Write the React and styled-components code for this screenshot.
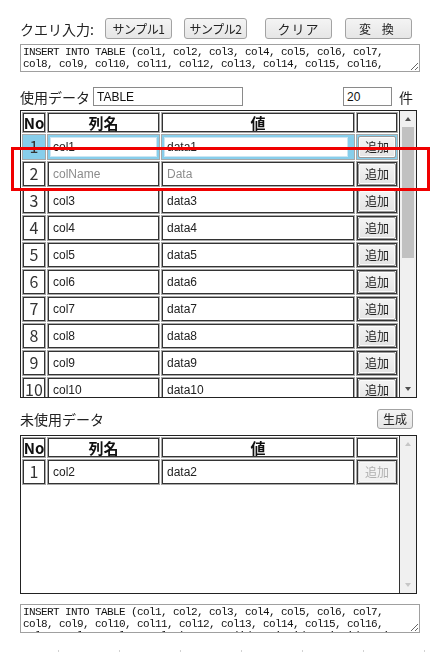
import styled, { createGlobalStyle } from 'styled-components';

const GlobalStyle = createGlobalStyle`
  html, body { margin: 0; padding: 0; background: #fff; overflow: hidden; }
  body { font-family: "Noto Sans CJK JP", "Noto Sans", sans-serif; color: #222; }
`;

const QUERY =
  'INSERT INTO TABLE (col1, col2, col3, col4, col5, col6, col7, col8, col9, col10, col11, col12, col13, col14, col15, col16, col17, col18, col19, col20) VALUES (' +
  Array.from({ length: 20 }, (_, i) => `'data${i + 1}'`).join(', ') +
  ');';

const usedRows = Array.from({ length: 20 }, (_, i) => ({
  no: i + 1,
  name: i === 1 ? '' : `col${i + 1}`,
  value: i === 1 ? '' : `data${i + 1}`,
}));

const Page = styled.div`
  position: relative;
  width: 400px;
  padding: 18px 0 0 20px;
`;

const Row = styled.div`
  display: flex;
  align-items: center;
  width: ${(p) => p.$w || 393}px;
  height: ${(p) => p.$h || 21}px;
  margin-top: ${(p) => p.$mt || 0}px;
`;

const Label = styled.span`
  font-size: 14px;
  line-height: 20px;
  color: #222;
  white-space: nowrap;
`;

const Button = styled.button`
  box-sizing: border-box;
  width: ${(p) => p.$w}px;
  height: ${(p) => p.$h || 21}px;
  margin-left: ${(p) => (p.$ml === 'auto' ? 'auto' : `${p.$ml || 0}px`)};
  padding: 0;
  font-family: "Noto Sans CJK JP", sans-serif;
  font-size: ${(p) => p.$fs || 12}px;
  line-height: 1;
  color: #222;
  background: linear-gradient(#f4f4f4, #e6e6e6);
  border: 1px solid #a3a3a3;
  border-radius: 3px;
  letter-spacing: ${(p) => p.$ls || 0}px;
`;

const Query = styled.textarea`
  box-sizing: border-box;
  display: block;
  width: 400px;
  height: ${(p) => p.$h || 28}px;
  margin-top: ${(p) => p.$mt || 0}px;
  padding: 1px 2px;
  font-family: "Liberation Mono", monospace;
  font-size: 11px;
  letter-spacing: -0.6px;
  line-height: 12px;
  color: #111;
  border: 1px solid #a0a0a0;
  overflow-y: scroll;
  resize: both;
  &::-webkit-scrollbar { width: 14px; background: #f0f0f0; }
  &::-webkit-scrollbar-thumb { background: transparent; }
`;

const TextInput = styled.input`
  box-sizing: border-box;
  width: ${(p) => p.$w}px;
  height: 19px;
  margin-left: ${(p) => (p.$ml === 'auto' ? 'auto' : `${p.$ml || 0}px`)};
  padding: 0 3px;
  font-family: "Liberation Sans", Arial, sans-serif;
  font-size: 12px;
  color: #111;
  border: 1px solid #8a8a8a;
  outline: none;
`;

const Unit = styled(Label)`
  margin-left: 7px;
`;

const Box = styled.div`
  box-sizing: border-box;
  display: flex;
  width: 397px;
  height: ${(p) => p.$h}px;
  margin-top: ${(p) => p.$mt || 0}px;
  border: 1px solid #222;
  background: #fff;
`;

const Viewport = styled.div`
  flex: 1;
  overflow: hidden;
  border-right: 1px solid #333;
`;

const Grid = styled.table`
  border-collapse: separate;
  border-spacing: 1px;
  table-layout: fixed;
  width: 378px;
  font-size: 12px;
  line-height: 18px;
`;

const Th = styled.th`
  box-sizing: border-box;
  width: ${(p) => p.$w}px;
  height: 21px;
  padding: 0;
  font-family: "Noto Sans CJK JP", "Liberation Sans", sans-serif;
  font-size: 15px;
  line-height: 17px;
  font-weight: bold;
  color: #111;
  border: 1px solid #a8a8a8;
  box-shadow: inset 0 0 0 1px #333;
  background: #fff;
`;

const Td = styled.td`
  box-sizing: border-box;
  height: 26px;
  padding: ${(p) => (p.$tight ? 1 : 2)}px;
  border: 1px solid #a8a8a8;
  box-shadow: ${(p) => (p.$sel ? 'none' : 'inset 0 0 0 1px #333')};
  background: ${(p) => (p.$sel ? '#87ceeb' : '#fff')};
  text-align: ${(p) => (p.$center ? 'center' : 'left')};
  vertical-align: middle;
`;

const NoText = styled.span`
  font-family: "Noto Sans CJK JP", sans-serif;
  font-size: 16px;
  line-height: 18px;
  color: #333;
`;

const CellInput = styled.input`
  box-sizing: border-box;
  display: block;
  width: ${(p) => (p.$w ? `${p.$w}px` : '100%')};
  height: 20px;
  padding: 0 2px;
  font-family: "Liberation Sans", Arial, sans-serif;
  font-size: 12px;
  color: #222;
  background: #fff;
  border: 1px solid ${(p) => (p.$sel ? '#cde6f2' : '#fff')};
  outline: none;
  &::placeholder { color: #8c8c8c; }
`;

const AddButton = styled.button`
  box-sizing: border-box;
  display: block;
  width: 38px;
  height: 22px;
  margin: 0 auto;
  padding: 0;
  font-family: "Noto Sans CJK JP", sans-serif;
  font-size: 12px;
  line-height: 1;
  color: ${(p) => (p.disabled ? '#b0b0b0' : '#222')};
  background: ${(p) => (p.disabled ? '#f2f2f2' : 'linear-gradient(#f4f4f4, #e4e4e4)')};
  border: 1px solid ${(p) => (p.disabled ? '#cfcfcf' : '#9a9a9a')};
  box-shadow: inset 0 0 0 1px ${(p) => (p.disabled ? '#f8f8f8' : '#fdfdfd')};
  border-radius: 2px;
`;

const Scrollbar = styled.div`
  display: flex;
  flex-direction: column;
  width: 16px;
  background: #f0f0f0;
`;

const Arrow = styled.div`
  height: 16px;
  display: flex;
  align-items: center;
  justify-content: center;
  &::after {
    content: '';
    border-left: 3.5px solid transparent;
    border-right: 3.5px solid transparent;
    ${(p) => (p.$down ? 'border-top' : 'border-bottom')}: 4px solid ${(p) => (p.$off ? '#c6c6c6' : '#505050')};
  }
`;

const Track = styled.div`
  flex: 1;
  padding: 0 2px;
`;

const Thumb = styled.div`
  height: ${(p) => p.$h}px;
  background: #c1c1c1;
`;

const Highlight = styled.div`
  position: absolute;
  left: 11px;
  top: 147px;
  width: 419px;
  height: 44px;
  box-sizing: border-box;
  border: 3px solid #f00000;
  pointer-events: none;
`;

const Footer = styled.div`
  display: grid;
  grid-template-columns: repeat(8, 61px);
  width: 441px;
  height: 12px;
  margin: 17px 0 0 -22px;
  overflow: hidden;
  background: linear-gradient(#d2d2d2, #d2d2d2) 0 2px / 100% 1px no-repeat;
`;

const FooterCell = styled.div`
  border-right: 1px solid #d2d2d2;
`;

const DataTable = ({ rows, disabled, height, mt, thumb }) => (
  <Box $h={height} $mt={mt}>
    <Viewport>
      <Grid>
        <thead>
          <tr>
            <Th $w={24}>No</Th>
            <Th $w={113}>列名</Th>
            <Th $w={194}>値</Th>
            <Th $w={42}></Th>
          </tr>
        </thead>
        <tbody>
          {rows.map((r, i) => {
            const sel = !disabled && i === 0;
            return (
              <tr key={r.no}>
                <Td $sel={sel} $center>
                  <NoText>{r.no}</NoText>
                </Td>
                <Td $sel={sel}>
                  <CellInput $sel={sel} defaultValue={r.name} placeholder="colName" />
                </Td>
                <Td $sel={sel}>
                  <CellInput $sel={sel} $w={184} defaultValue={r.value} placeholder="Data" />
                </Td>
                <Td $sel={sel} $tight>
                  <AddButton disabled={disabled}>追加</AddButton>
                </Td>
              </tr>
            );
          })}
        </tbody>
      </Grid>
    </Viewport>
    <Scrollbar>
      <Arrow $off={!thumb} />
      <Track>{thumb ? <Thumb $h={thumb} /> : null}</Track>
      <Arrow $down $off={!thumb} />
    </Scrollbar>
  </Box>
);

export default function App() {
  return (
    <>
      <GlobalStyle />
      <Page>
        <Row>
          <Label>クエリ入力:</Label>
          <Button $w={67} $ml={11} $ls={-0.5}>サンプル1</Button>
          <Button $w={63} $ml={12} $ls={-0.5}>サンプル2</Button>
          <Button $w={67} $ml={18} $fs={13} $ls={1}>クリア</Button>
          <Button $w={67} $ml={13} $ls={4}>変 換</Button>
        </Row>
        <Query $mt={5} defaultValue={QUERY} />
        <Row $mt={15} $h={19}>
          <Label>使用データ</Label>
          <TextInput $w={150} $ml={3} defaultValue="TABLE" />
          <TextInput $w={49} $ml="auto" defaultValue="20" />
          <Unit>件</Unit>
        </Row>
        <DataTable rows={usedRows} height={288} mt={4} thumb={131} />
        <Row $mt={11} $h={20}>
          <Label>未使用データ</Label>
          <Button $w={36} $h={20} $ml="auto">生成</Button>
        </Row>
        <DataTable rows={[{ no: 1, name: 'col2', value: 'data2' }]} disabled height={159} mt={6} />
        <Query $mt={10} $h={29} defaultValue={QUERY} />
        <Footer>
          {Array.from({ length: 8 }, (_, i) => (
            <FooterCell key={i} />
          ))}
        </Footer>
        <Highlight />
      </Page>
    </>
  );
}
